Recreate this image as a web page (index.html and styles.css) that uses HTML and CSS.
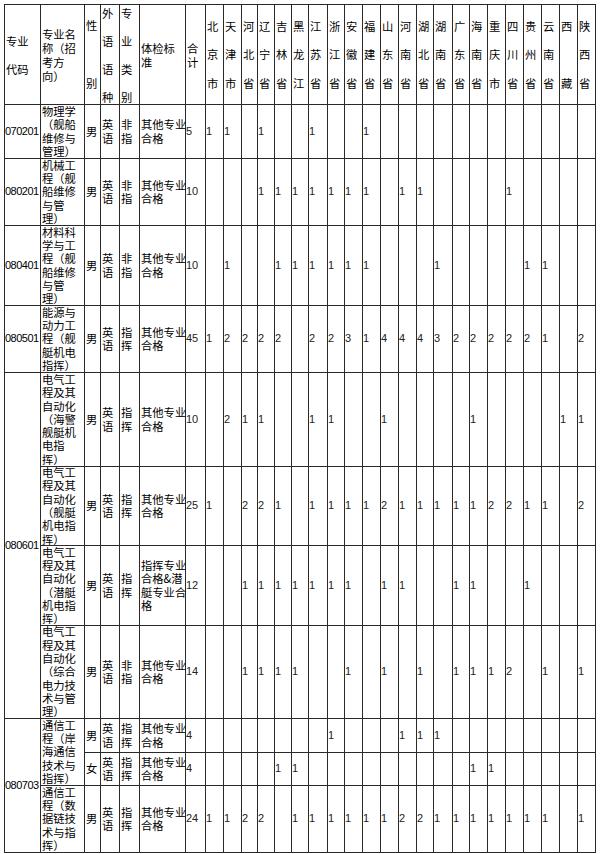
FILE: index.html
```html
<!DOCTYPE html>
<html lang="zh-CN">
<head>
<meta charset="utf-8">
<title>招生计划表</title>
<link rel="stylesheet" href="styles.css">
</head>
<body>
<div class="tbl">
  <!-- header -->
  <div class="c h28"><span>专业<br>代码</span></div>
  <div class="c h14"><span>专业名<br>称（招<br>考方<br>向）</span></div>
  <div class="c h29"><span>性<br><br>别</span></div>
  <div class="c h28"><span>外<br>语<br>语<br>种</span></div>
  <div class="c h28"><span>专<br>业<br>类<br>别</span></div>
  <div class="c h14"><span>体检标<br>准</span></div>
  <div class="c h14"><span>合<br>计</span></div>
  <div class="c hp"><span>北<br>京<br>市</span></div>
  <div class="c hp"><span>天<br>津<br>市</span></div>
  <div class="c hp"><span>河<br>北<br>省</span></div>
  <div class="c hp"><span>辽<br>宁<br>省</span></div>
  <div class="c hp"><span>吉<br>林<br>省</span></div>
  <div class="c hp"><span>黑<br>龙<br>江</span></div>
  <div class="c hp"><span>江<br>苏<br>省</span></div>
  <div class="c hp"><span>浙<br>江<br>省</span></div>
  <div class="c hp"><span>安<br>徽<br>省</span></div>
  <div class="c hp"><span>福<br>建<br>省</span></div>
  <div class="c hp"><span>山<br>东<br>省</span></div>
  <div class="c hp"><span>河<br>南<br>省</span></div>
  <div class="c hp"><span>湖<br>北<br>省</span></div>
  <div class="c hp"><span>湖<br>南<br>省</span></div>
  <div class="c hp"><span>广<br>东<br>省</span></div>
  <div class="c hp"><span>海<br>南<br>省</span></div>
  <div class="c hp"><span>重<br>庆<br>市</span></div>
  <div class="c hp"><span>四<br>川<br>省</span></div>
  <div class="c hp"><span>贵<br>州<br>省</span></div>
  <div class="c hp"><span>云<br>南<br>省</span></div>
  <div class="c hp"><span>西<br><br>藏</span></div>
  <div class="c hp"><span>陕<br>西<br>省</span></div>

  <!-- row 1 -->
  <div class="c d">070201</div>
  <div class="c"><span>物理学<br>（舰船<br>维修与<br>管理）</span></div>
  <div class="c"><span>男</span></div>
  <div class="c"><span>英<br>语</span></div>
  <div class="c"><span>非<br>指</span></div>
  <div class="c"><span>其他专业<br>合格</span></div>
  <div class="c n">5</div>
  <div class="c n">1</div><div class="c n">1</div><div class="c"></div><div class="c n">1</div><div class="c"></div><div class="c"></div>
  <div class="c n">1</div><div class="c"></div><div class="c"></div><div class="c n">1</div><div class="c"></div><div class="c"></div>
  <div class="c"></div><div class="c"></div><div class="c"></div><div class="c"></div><div class="c"></div><div class="c"></div>
  <div class="c"></div><div class="c"></div><div class="c"></div><div class="c"></div>

  <!-- row 2 -->
  <div class="c d">080201</div>
  <div class="c"><span>机械工<br>程（舰<br>船维修<br>与管<br>理）</span></div>
  <div class="c"><span>男</span></div>
  <div class="c"><span>英<br>语</span></div>
  <div class="c"><span>非<br>指</span></div>
  <div class="c"><span>其他专业<br>合格</span></div>
  <div class="c n">10</div>
  <div class="c"></div><div class="c"></div><div class="c"></div><div class="c n">1</div><div class="c n">1</div><div class="c n">1</div>
  <div class="c n">1</div><div class="c n">1</div><div class="c n">1</div><div class="c n">1</div><div class="c"></div><div class="c n">1</div>
  <div class="c n">1</div><div class="c"></div><div class="c"></div><div class="c"></div><div class="c"></div><div class="c n">1</div>
  <div class="c"></div><div class="c"></div><div class="c"></div><div class="c"></div>

  <!-- row 3 -->
  <div class="c d">080401</div>
  <div class="c"><span>材料科<br>学与工<br>程（舰<br>船维修<br>与管<br>理）</span></div>
  <div class="c"><span>男</span></div>
  <div class="c"><span>英<br>语</span></div>
  <div class="c"><span>非<br>指</span></div>
  <div class="c"><span>其他专业<br>合格</span></div>
  <div class="c n">10</div>
  <div class="c"></div><div class="c n">1</div><div class="c"></div><div class="c"></div><div class="c n">1</div><div class="c n">1</div>
  <div class="c n">1</div><div class="c n">1</div><div class="c n">1</div><div class="c n">1</div><div class="c"></div><div class="c"></div>
  <div class="c"></div><div class="c n">1</div><div class="c"></div><div class="c"></div><div class="c"></div><div class="c"></div>
  <div class="c n">1</div><div class="c n">1</div><div class="c"></div><div class="c"></div>

  <!-- row 4 -->
  <div class="c d">080501</div>
  <div class="c"><span>能源与<br>动力工<br>程（舰<br>艇机电<br>指挥）</span></div>
  <div class="c"><span>男</span></div>
  <div class="c"><span>英<br>语</span></div>
  <div class="c"><span>指<br>挥</span></div>
  <div class="c"><span>其他专业<br>合格</span></div>
  <div class="c n">45</div>
  <div class="c n">1</div><div class="c n">2</div><div class="c n">2</div><div class="c n">2</div><div class="c n">2</div><div class="c"></div>
  <div class="c n">2</div><div class="c n">2</div><div class="c n">3</div><div class="c n">1</div><div class="c n">4</div><div class="c n">4</div>
  <div class="c n">4</div><div class="c n">3</div><div class="c n">2</div><div class="c n">2</div><div class="c n">2</div><div class="c n">2</div>
  <div class="c n">2</div><div class="c n">1</div><div class="c"></div><div class="c n">2</div>

  <!-- row 5 -->
  <div class="c d r4">080601</div>
  <div class="c"><span>电气工<br>程及其<br>自动化<br>（海警<br>舰艇机<br>电指<br>挥）</span></div>
  <div class="c"><span>男</span></div>
  <div class="c"><span>英<br>语</span></div>
  <div class="c"><span>指<br>挥</span></div>
  <div class="c"><span>其他专业<br>合格</span></div>
  <div class="c n">10</div>
  <div class="c"></div><div class="c n">2</div><div class="c n">1</div><div class="c n">1</div><div class="c"></div><div class="c"></div>
  <div class="c n">1</div><div class="c n">1</div><div class="c"></div><div class="c"></div><div class="c n">1</div><div class="c"></div>
  <div class="c"></div><div class="c"></div><div class="c"></div><div class="c n">1</div><div class="c"></div><div class="c"></div>
  <div class="c"></div><div class="c"></div><div class="c n">1</div><div class="c n">1</div>

  <!-- row 6 -->
  <div class="c"><span>电气工<br>程及其<br>自动化<br>（舰艇<br>机电指<br>挥）</span></div>
  <div class="c"><span>男</span></div>
  <div class="c"><span>英<br>语</span></div>
  <div class="c"><span>指<br>挥</span></div>
  <div class="c"><span>其他专业<br>合格</span></div>
  <div class="c n">25</div>
  <div class="c n">1</div><div class="c"></div><div class="c n">2</div><div class="c n">2</div><div class="c n">1</div><div class="c"></div>
  <div class="c n">1</div><div class="c n">1</div><div class="c n">1</div><div class="c n">1</div><div class="c n">2</div><div class="c n">1</div>
  <div class="c n">1</div><div class="c n">1</div><div class="c n">1</div><div class="c n">1</div><div class="c n">2</div><div class="c n">2</div>
  <div class="c n">1</div><div class="c n">1</div><div class="c"></div><div class="c n">2</div>

  <!-- row 7 -->
  <div class="c"><span>电气工<br>程及其<br>自动化<br>（潜艇<br>机电指<br>挥）</span></div>
  <div class="c"><span>男</span></div>
  <div class="c"><span>英<br>语</span></div>
  <div class="c"><span>指<br>挥</span></div>
  <div class="c"><span>指挥专业<br>合格&amp;潜<br>艇专业合<br>格</span></div>
  <div class="c n">12</div>
  <div class="c"></div><div class="c"></div><div class="c n">1</div><div class="c n">1</div><div class="c n">1</div><div class="c n">1</div>
  <div class="c n">1</div><div class="c n">1</div><div class="c n">1</div><div class="c"></div><div class="c n">1</div><div class="c n">1</div>
  <div class="c"></div><div class="c"></div><div class="c n">1</div><div class="c n">1</div><div class="c"></div><div class="c"></div>
  <div class="c n">1</div><div class="c"></div><div class="c"></div><div class="c"></div>

  <!-- row 8 -->
  <div class="c"><span>电气工<br>程及其<br>自动化<br>（综合<br>电力技<br>术与管<br>理）</span></div>
  <div class="c"><span>男</span></div>
  <div class="c"><span>英<br>语</span></div>
  <div class="c"><span>非<br>指</span></div>
  <div class="c"><span>其他专业<br>合格</span></div>
  <div class="c n">14</div>
  <div class="c"></div><div class="c"></div><div class="c n">1</div><div class="c n">1</div><div class="c n">1</div><div class="c n">1</div>
  <div class="c"></div><div class="c"></div><div class="c n">1</div><div class="c"></div><div class="c n">1</div><div class="c"></div>
  <div class="c n">1</div><div class="c"></div><div class="c n">1</div><div class="c n">1</div><div class="c n">1</div><div class="c n">2</div>
  <div class="c"></div><div class="c n">1</div><div class="c"></div><div class="c n">1</div>

  <!-- row 9a -->
  <div class="c d r3">080703</div>
  <div class="c r2"><span>通信工<br>程（岸<br>海通信<br>技术与<br>指挥）</span></div>
  <div class="c"><span>男</span></div>
  <div class="c"><span>英<br>语</span></div>
  <div class="c"><span>指<br>挥</span></div>
  <div class="c"><span>其他专业<br>合格</span></div>
  <div class="c n">4</div>
  <div class="c"></div><div class="c"></div><div class="c"></div><div class="c"></div><div class="c"></div><div class="c"></div>
  <div class="c"></div><div class="c n">1</div><div class="c"></div><div class="c"></div><div class="c"></div><div class="c n">1</div>
  <div class="c n">1</div><div class="c n">1</div><div class="c"></div><div class="c"></div><div class="c"></div><div class="c"></div>
  <div class="c"></div><div class="c"></div><div class="c"></div><div class="c"></div>

  <!-- row 9b -->
  <div class="c"><span>女</span></div>
  <div class="c"><span>英<br>语</span></div>
  <div class="c"><span>指<br>挥</span></div>
  <div class="c"><span>其他专业<br>合格</span></div>
  <div class="c n">4</div>
  <div class="c"></div><div class="c"></div><div class="c"></div><div class="c"></div><div class="c n">1</div><div class="c n">1</div>
  <div class="c"></div><div class="c"></div><div class="c"></div><div class="c"></div><div class="c"></div><div class="c"></div>
  <div class="c"></div><div class="c"></div><div class="c"></div><div class="c n">1</div><div class="c n">1</div><div class="c"></div>
  <div class="c"></div><div class="c"></div><div class="c"></div><div class="c"></div>

  <!-- row 10 -->
  <div class="c"><span>通信工<br>程（数<br>据链技<br>术与指<br>挥）</span></div>
  <div class="c"><span>男</span></div>
  <div class="c"><span>英<br>语</span></div>
  <div class="c"><span>指<br>挥</span></div>
  <div class="c"><span>其他专业<br>合格</span></div>
  <div class="c n">24</div>
  <div class="c n">1</div><div class="c n">1</div><div class="c n">2</div><div class="c n">2</div><div class="c"></div><div class="c n">1</div>
  <div class="c n">1</div><div class="c n">1</div><div class="c n">1</div><div class="c n">1</div><div class="c n">1</div><div class="c n">2</div>
  <div class="c n">2</div><div class="c n">1</div><div class="c n">1</div><div class="c n">1</div><div class="c n">1</div><div class="c n">1</div>
  <div class="c n">1</div><div class="c n">1</div><div class="c"></div><div class="c n">1</div>
</div>
</body>
</html>
```

FILE: styles.css
```css
html, body {
  margin: 0;
  padding: 0;
  background: #fff;
}

body {
  font-family: "Noto Sans CJK SC", "Liberation Sans", sans-serif;
  font-size: 11.3px;
  color: #000;
}

.tbl {
  display: grid;
  width: max-content;
  margin: 4px 0 0 4px;
  grid-template-columns:
    36px 44px 16px 19px 20px 46px 20px
    18px 18px 16px 17px 17px 17px
    19px 17px 18px 18px 18px 18px
    17px 19px 17px 18px 18px 18px
    18px 18px 18px 18px;
  grid-template-rows: 100px 54px 67px 80px 67px 94px 79px 80px 93px 34px 33px 67px;
  border-top: 1px solid #2a2a2a;
  border-left: 1px solid #2a2a2a;
}

.c {
  box-sizing: border-box;
  display: flex;
  align-items: center;
  min-width: 0;
  min-height: 0;
  padding-left: 1px;
  border-right: 1px solid #2a2a2a;
  border-bottom: 1px solid #2a2a2a;
  white-space: nowrap;
  line-height: 13.3px;
}

.c span {
  display: block;
}

.h28 { line-height: 28px; }
.h29 { line-height: 29px; }
.h14 { line-height: 14px; }
.hp  { line-height: 28.5px; }

.d {
  font-family: "Liberation Sans", sans-serif;
  font-size: 11px;
  letter-spacing: -0.5px;
  padding-left: 0;
}

.n {
  font-family: "Liberation Sans", sans-serif;
  font-size: 11px;
  padding-left: 0;
  color: #222;
}

.r2 { grid-row: span 2; }
.r3 { grid-row: span 3; }
.r4 { grid-row: span 4; }
```
